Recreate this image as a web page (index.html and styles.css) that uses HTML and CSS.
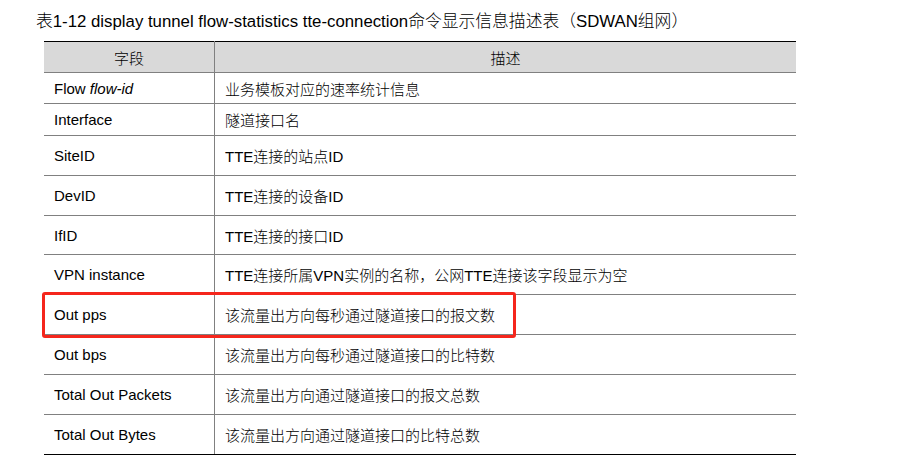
FILE: index.html
```html
<!DOCTYPE html>
<html lang="zh-CN">
<head>
<meta charset="utf-8">
<title>display tunnel flow-statistics tte-connection</title>
<link rel="stylesheet" href="styles.css">
</head>
<body>
<h1 class="title">表1-12 display tunnel flow-statistics tte-connection命令显示信息描述表（SDWAN组网）</h1>
<div class="wrap">
  <table class="desc">
    <thead>
      <tr class="r-head"><th class="c1">字段</th><th class="c2">描述</th></tr>
    </thead>
    <tbody>
      <tr class="r-s1"><td class="c1">Flow <i>flow-id</i></td><td class="c2">业务模板对应的速率统计信息</td></tr>
      <tr class="r-s2"><td class="c1">Interface</td><td class="c2">隧道接口名</td></tr>
      <tr class="r-n"><td class="c1">SiteID</td><td class="c2">TTE连接的站点ID</td></tr>
      <tr class="r-n"><td class="c1">DevID</td><td class="c2">TTE连接的设备ID</td></tr>
      <tr class="r-m"><td class="c1">IfID</td><td class="c2">TTE连接的接口ID</td></tr>
      <tr class="r-n"><td class="c1">VPN instance</td><td class="c2">TTE连接所属VPN实例的名称，公网TTE连接该字段显示为空</td></tr>
      <tr class="r-n"><td class="c1">Out pps</td><td class="c2">该流量出方向每秒通过隧道接口的报文数</td></tr>
      <tr class="r-n"><td class="c1">Out bps</td><td class="c2">该流量出方向每秒通过隧道接口的比特数</td></tr>
      <tr class="r-n"><td class="c1">Total Out Packets</td><td class="c2">该流量出方向通过隧道接口的报文总数</td></tr>
      <tr class="r-n r-last"><td class="c1">Total Out Bytes</td><td class="c2">该流量出方向通过隧道接口的比特总数</td></tr>
    </tbody>
  </table>
  <div class="highlight"></div>
</div>
</body>
</html>
```
FILE: styles.css
```css
html, body {
  margin: 0;
  padding: 0;
  background: #fff;
}
body {
  font-family: "Liberation Sans", Arial, "Noto Sans CJK SC Light", "Noto Sans CJK SC", sans-serif;
  color: #000;
}
.title {
  margin: 0;
  padding: 12px 0 0 36px;
  height: 41px;
  box-sizing: border-box;
  font-size: 16.8px;
  line-height: 20px;
  font-weight: normal;
  white-space: nowrap;
}
.wrap {
  position: relative;
  margin-left: 44px;
  width: 752px;
}
.desc {
  border-collapse: collapse;
  width: 752px;
  table-layout: fixed;
  font-size: 15px;
}
.desc th,
.desc td {
  padding: 0 10px;
  text-align: left;
  vertical-align: middle;
  font-weight: normal;
  border-bottom: 1px solid #808080;
  white-space: nowrap;
}
.desc th {
  background: #d9d9d9;
  text-align: center;
  border-top: 1px solid #000;
}
.desc .c1 {
  width: 150px;
  border-right: 1px solid #808080;
}
.desc .r-head { height: 31px; }
.desc .r-s1 { height: 31px; }
.desc .r-s2 { height: 32px; }
.desc .r-m { height: 39px; }
.desc .r-n { height: 40px; }
.desc .r-last td { border-bottom-color: #000; }
.highlight {
  position: absolute;
  left: -2px;
  top: 251px;
  width: 474px;
  height: 46px;
  box-sizing: border-box;
  border: 3px solid #f5261c;
  border-radius: 3px;
}
```
